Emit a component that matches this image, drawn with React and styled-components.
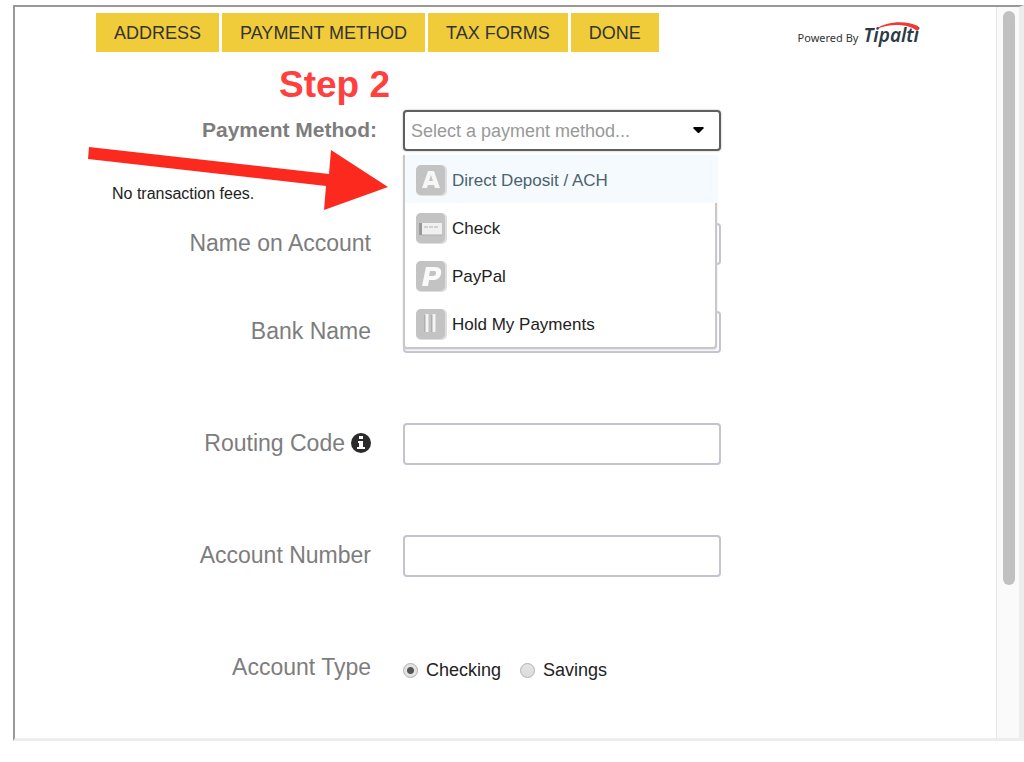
import React from "react";
import styled, { createGlobalStyle } from "styled-components";

const GlobalStyle = createGlobalStyle`
  *, *::before, *::after { box-sizing: border-box; }
  body {
    margin: 0;
    background: #fff;
    color: #222;
    font-family: "Liberation Sans", Arial, sans-serif;
  }
`;

const Frame = styled.div`
  display: flex;
  margin: 5px 0 0 13px;
  border-style: solid;
  border-width: 2px 5px 3px 2px;
  border-color: #999 #ededed #ededed #999;
`;

const Content = styled.main`
  position: relative;
  flex: 1;
  min-width: 0;
  padding-bottom: 55px;
`;

const ScrollTrack = styled.div`
  width: 23px;
  padding: 4px 4px 0 6px;
  border-left: 1px solid #e6e6e6;
  background: #fafafa;
`;

const ScrollThumb = styled.div`
  height: 79%;
  border-radius: 8px;
  background: #c1c1c1;
`;

const Header = styled.header`
  display: flex;
  justify-content: space-between;
  align-items: flex-start;
  padding: 6px 77px 0 81px;
`;

const Steps = styled.nav`
  display: flex;
  gap: 3px;
`;

const StepButton = styled.button`
  height: 39px;
  padding: 1px 18px 0;
  border: 0;
  background: #f0cc3a;
  color: #333;
  font: 18px/38px "Liberation Sans", Arial, sans-serif;
  white-space: nowrap;
`;

const Brand = styled.div`
  display: flex;
  align-items: baseline;
  gap: 5px;
  padding-top: 8px;
  color: #333;
  font: 11px/28px "Noto Sans", sans-serif;
  white-space: nowrap;
`;

const Logo = styled.span`
  position: relative;
  color: #2b3a44;
  font: italic 600 19px/28px "Noto Sans", sans-serif;

  svg {
    position: absolute;
    top: 1px;
    right: 0;
  }
`;

const StepTitle = styled.h1`
  margin: 12px 0 4px;
  padding-left: 264px;
  color: #ff403c;
  font-size: 37px;
  line-height: 42px;
`;

const Row = styled.div`
  display: grid;
  grid-template-columns: minmax(0, 356px) minmax(0, 318px);
  column-gap: 32px;
  align-items: center;
  margin-bottom: ${(p) => p.$space || 0}px;
`;

const Label = styled.label`
  display: flex;
  align-items: center;
  justify-content: flex-end;
  gap: 6px;
  padding-bottom: 2px;
  color: #7d7d7d;
  font-size: 23px;
  line-height: 28px;
  white-space: nowrap;
`;

const MethodRow = styled(Row)`
  grid-template-columns: minmax(0, 362px) minmax(0, 318px);
  column-gap: 26px;
`;

const MethodLabel = styled(Label)`
  font-size: 21px;
  font-weight: bold;
`;

const GroupLabel = styled(Label).attrs({ as: "span" })``;

const TextInput = styled.input`
  width: 100%;
  height: 42px;
  padding: 0 8px;
  border: 2px solid #c4c3d0;
  border-radius: 4px;
  background: #fff;
  font: 18px "Liberation Sans", Arial, sans-serif;
`;

const Picker = styled.div`
  position: relative;
`;

const Select = styled.select`
  appearance: none;
  display: block;
  width: 100%;
  height: 41px;
  padding: 0 32px 0 6px;
  border: 2px solid #606060;
  border-radius: 4px;
  background: #fff;
  box-shadow: 0 0 2px #aaa;
  color: #999;
  font: 18px "Liberation Sans", Arial, sans-serif;
`;

const Caret = styled.svg`
  position: absolute;
  top: 17px;
  right: 17px;
  pointer-events: none;
`;

const Menu = styled.ul`
  position: absolute;
  z-index: 1;
  top: 45px;
  left: 0;
  right: 4px;
  margin: 0;
  padding: 0;
  list-style: none;
  border: 2px solid #c8c8c8;
  border-top: 0;
  border-radius: 0 0 4px 4px;
  background: #fff;
  box-shadow: 0 1px 2px #ddd;
`;

const MenuItem = styled.button`
  display: flex;
  align-items: center;
  gap: 5px;
  width: ${(p) => (p.$active ? "calc(100% + 3px)" : "100%")};
  height: 48px;
  padding: 4px 0 0 11px;
  border: 0;
  background: ${(p) => (p.$active ? "#f4fafd" : "transparent")};
  color: ${(p) => (p.$active ? "#4c626d" : "#222")};
  font: 17px "Liberation Sans", Arial, sans-serif;
  text-align: left;

  svg {
    margin-bottom: 2px;
  }
`;

const Note = styled.p`
  margin: 33px 0 19px;
  padding-left: 97px;
  font-size: 16px;
  line-height: 20px;
`;

const Choices = styled.div`
  display: flex;
  gap: 19px;
  padding-top: 4px;
`;

const Choice = styled.label`
  display: flex;
  align-items: center;
  gap: 8px;
  font-size: 18px;
  line-height: 24px;
`;

const Radio = styled.input`
  appearance: none;
  width: 15px;
  height: 15px;
  margin: 0;
  border: 1px solid #b0b0b0;
  border-radius: 50%;
  background: linear-gradient(#e4e4e4, #dcdcdc);

  &:checked {
    background: radial-gradient(circle, #555 0 3px, #e3e3e3 4px);
  }
`;

const Arrow = styled.svg`
  position: absolute;
  z-index: 2;
  top: 138px;
  left: 72px;
  pointer-events: none;
`;

function MethodIcon({ kind }) {
  return (
    <svg width="31" height="31" viewBox="0 0 31 31" aria-hidden="true">
      <rect width="31" height="31" rx="5" fill="#dedede" />
      <rect width="29" height="30" rx="5" fill="#c3c3c3" />
      {kind === "ach" && (
        <path d="M12 6h6l6 17h-5l-1-3h-6l-1 3H6zM15 10l-2 6h4z" fill="#f7f7f7" fillRule="evenodd" />
      )}
      {kind === "check" && (
        <g>
          <path d="M3 10h3v12H3z" fill="#999" />
          <path d="M6 10h20v12H6z" fill="#f0f0f0" />
          <path d="M8 14h4M13 14h4M18 14h4" stroke="#d0d0d0" strokeWidth="2" />
          <path d="M6 22h20" stroke="#b0b0b0" />
        </g>
      )}
      {kind === "paypal" && (
        <path
          d="M10 6h9c5 0 7 3 6 7s-4 6-8 6h-4l-1 6H6zM14 10l-1 5h4c2 0 3-1 3-3s-1-2-2-2z"
          fill="#fafafa"
          fillRule="evenodd"
        />
      )}
      {kind === "hold" && (
        <g>
          <path d="M9 6v17M16 6v17" stroke="#9b9b9b" />
          <path d="M11 5v18M18 5v18" stroke="#f4f4f4" strokeWidth="3" />
        </g>
      )}
    </svg>
  );
}

const methods = [
  { kind: "ach", name: "Direct Deposit / ACH" },
  { kind: "check", name: "Check" },
  { kind: "paypal", name: "PayPal" },
  { kind: "hold", name: "Hold My Payments" },
];

const steps = ["ADDRESS", "PAYMENT METHOD", "TAX FORMS", "DONE"];

export default function App() {
  return (
    <>
      <GlobalStyle />
      <Frame>
        <Content>
          <Header>
            <Steps>
              {steps.map((s) => (
                <StepButton key={s} type="button">{s}</StepButton>
              ))}
            </Steps>
            <Brand>
              Powered By
              <Logo>
                Tipalti
                <svg width="43" height="10" viewBox="0 0 43 10" aria-hidden="true">
                  <path d="M0 7C10-1 31-2 42 4c1 2 1 4-1 5C32 2 16 1 0 7z" fill="#ee3b33" />
                </svg>
              </Logo>
            </Brand>
          </Header>

          <StepTitle>Step 2</StepTitle>

          <MethodRow>
            <MethodLabel htmlFor="method">Payment Method:</MethodLabel>
            <Picker>
              <Select id="method" defaultValue="">
                <option value="">Select a payment method...</option>
              </Select>
              <Caret width="11" height="7" viewBox="0 0 11 7" aria-hidden="true">
                <path d="M1 0h9l1 1-5 5H5L0 1z" fill="#000" />
              </Caret>
              <Menu>
                {methods.map((m, i) => (
                  <li key={m.kind}>
                    <MenuItem type="button" $active={i === 0}>
                      <MethodIcon kind={m.kind} />
                      {m.name}
                    </MenuItem>
                  </li>
                ))}
              </Menu>
            </Picker>
          </MethodRow>

          <Note>No transaction fees.</Note>

          <Row $space={46}>
            <Label htmlFor="holder">Name on Account</Label>
            <TextInput id="holder" />
          </Row>
          <Row $space={70}>
            <Label htmlFor="bank">Bank Name</Label>
            <TextInput id="bank" />
          </Row>
          <Row $space={70}>
            <Label htmlFor="routing">
              Routing Code
              <svg width="20" height="20" viewBox="0 0 20 20" aria-hidden="true">
                <circle cx="10" cy="10" r="10" fill="#2b2b2b" />
                <path d="M8 3h4v3H8zM7 8h5v6h2v2H6v-2h2v-4H7z" fill="#fff" />
              </svg>
            </Label>
            <TextInput id="routing" />
          </Row>
          <Row $space={76}>
            <Label htmlFor="account">Account Number</Label>
            <TextInput id="account" />
          </Row>
          <Row>
            <GroupLabel id="type-label">Account Type</GroupLabel>
            <Choices role="radiogroup" aria-labelledby="type-label">
              <Choice>
                <Radio type="radio" name="type" defaultChecked />
                Checking
              </Choice>
              <Choice>
                <Radio type="radio" name="type" />
                Savings
              </Choice>
            </Choices>
          </Row>

          <Arrow width="302" height="67" viewBox="0 0 302 67" aria-hidden="true">
            <path d="M2 2l240 27 2-24 57 37-64 23 2-24L1 14z" fill="#fc2a1e" />
          </Arrow>
        </Content>
        <ScrollTrack>
          <ScrollThumb />
        </ScrollTrack>
      </Frame>
    </>
  );
}
